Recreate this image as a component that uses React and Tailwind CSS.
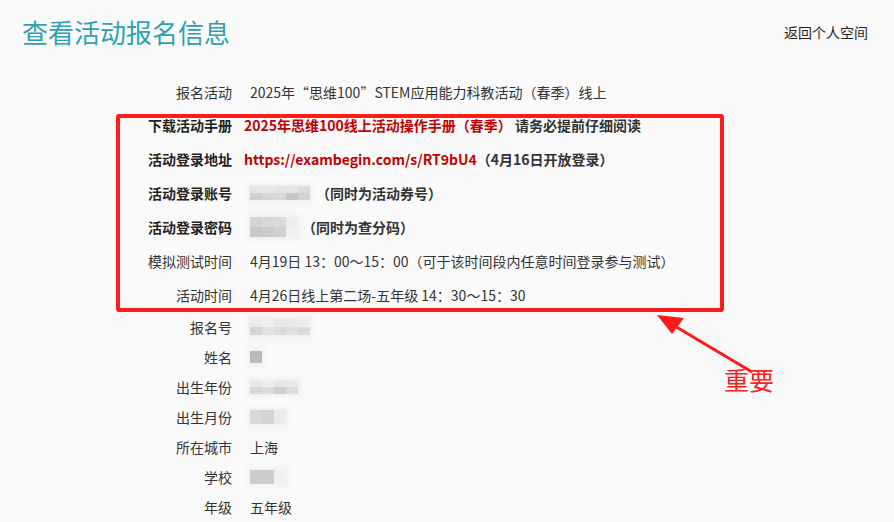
import React from "react";

const font = { fontFamily: '"Microsoft YaHei", "Noto Sans CJK SC", "Noto Sans", sans-serif' };

function Blur({ cells, h = "h-[12px]" }) {
  return (
    <div className="relative inline-flex items-center">
      <div className="absolute -inset-[3px] bg-[#f0f0f0] blur-[2px] rounded" />
      <div className="relative flex flex-col">
        {cells.map((row, i) => (
          <div key={i} className="flex">
            {row.map((c, j) => (
              <div key={j} className={`w-[12px] ${h}`} style={{ background: c }} />
            ))}
          </div>
        ))}
      </div>
    </div>
  );
}

function Row({ label, bold, tall, children }) {
  return (
    <div className={`flex items-center ${tall ? "h-[34px]" : "h-[30px]"}`}>
      <div className={`w-[232px] shrink-0 text-right text-[14px] ${bold ? "font-bold text-[#222]" : "text-[#333]"}`}>
        {label}
      </div>
      <div className="ml-[18px] flex items-center text-[14px] text-[#333]">{children}</div>
    </div>
  );
}

export default function App() {
  return (
    <div className="relative w-[894px] h-[522px] overflow-hidden bg-[#fafafa]" style={font}>
      <div className="flex items-start justify-between pl-[22px] pr-[26px] pt-[14px]">
        <h1 className="text-[26px] leading-[36px] text-[#2ba2b2]">查看活动报名信息</h1>
        <a className="mt-[8px] text-[14px] text-[#222]">返回个人空间</a>
      </div>

      <div className="mt-[26px] flex flex-col">
        <div className="h-[33px] flex items-center">
          <div className="w-[232px] text-right text-[14px] text-[#333]">报名活动</div>
          <div className="ml-[18px] text-[14px] text-[#333]">2025年“思维100”STEM应用能力科教活动（春季）线上</div>
        </div>
        <div className="h-[33px] flex items-center">
          <div className="w-[232px] text-right text-[14px] font-bold text-[#222]">下载活动手册</div>
          <div className="ml-[12px] text-[14px] font-bold">
            <span className="text-[#c00000]">2025年思维100线上活动操作手册（春季）</span>
            <span className="text-[#333]"> 请务必提前仔细阅读</span>
          </div>
        </div>
        <div className="h-[34px] flex items-center">
          <div className="w-[232px] text-right text-[14px] font-bold text-[#222]">活动登录地址</div>
          <div className="ml-[12px] text-[14px] font-bold">
            <span className="text-[#c00000]">https://exambegin.com/s/RT9bU4</span>
            <span className="text-[#333]">（4月16日开放登录）</span>
          </div>
        </div>
        <Row label="活动登录账号" bold tall>
          <Blur cells={[["#e6e6e6", "#e8e8e8", "#e4e4e4", "#e6e6e6", "#dcdcdc"], ["#d0d0d0", "#d4d6d8", "#d8d8d8", "#c6c6c6", "#d0d4d8"]]} h="h-[7px]" />
          <span className="ml-[6px] font-bold">（同时为活动券号）</span>
        </Row>
        <Row label="活动登录密码" bold tall>
          <Blur cells={[["#d4d4d4", "#d6d8da", "#dadada", "#ececec"], ["#c8c8c8", "#cccccc", "#d0d0d0", "#f0f0f0"]]} h="h-[10px]" />
          <span className="ml-[4px] font-bold">（同时为查分码）</span>
        </Row>
        <Row label="模拟测试时间" tall>
          4月19日 13：00～15：00（可于该时间段内任意时间登录参与测试）
        </Row>
        <Row label="活动时间" tall>
          4月26日线上第二场-五年级 14：30～15：30
        </Row>
        <Row label="报名号">
          <Blur cells={[["#ececec", "#eeeeee", "#e8e8e8", "#eaeaea", "#ececec"], ["#d6d6d6", "#e2e2e2", "#dcdcde", "#e0e0e0", "#dcdce0"]]} h="h-[8px]" />
        </Row>
        <Row label="姓名">
          <Blur cells={[["#b4b8ba"], ["#b8bcbe"]]} h="h-[6px]" />
        </Row>
        <Row label="出生年份">
          <Blur cells={[["#e8e8e8", "#eceef0", "#e8e8e8", "#eaeaea"], ["#d8d8d8", "#dcdada", "#ccced0", "#d8dcdc"]]} h="h-[7px]" />
        </Row>
        <Row label="出生月份">
          <Blur cells={[["#d8d8d8", "#d4d4d8", "#eaeaea"]]} h="h-[14px]" />
        </Row>
        <Row label="所在城市">上海</Row>
        <Row label="学校">
          <Blur cells={[["#cccccc", "#cdcdcd", "#f0f0f0"]]} h="h-[14px]" />
        </Row>
        <Row label="年级">五年级</Row>
      </div>

      {/* annotation overlay */}
      <div className="absolute left-[116px] top-[114px] w-[608px] h-[198px] border-[4px] border-[#ff1a1a] rounded-[3px]" />
      <svg className="absolute left-0 top-0" width="894" height="522">
        <line x1="752" y1="372" x2="668" y2="322" stroke="#ff1a1a" strokeWidth="3" />
        <polygon points="657,315 684,318 672,334" fill="#ff1a1a" />
      </svg>
      <div className="absolute left-[724px] top-[362px] text-[25px] leading-[34px] text-[#ff2020]">重要</div>
    </div>
  );
}
